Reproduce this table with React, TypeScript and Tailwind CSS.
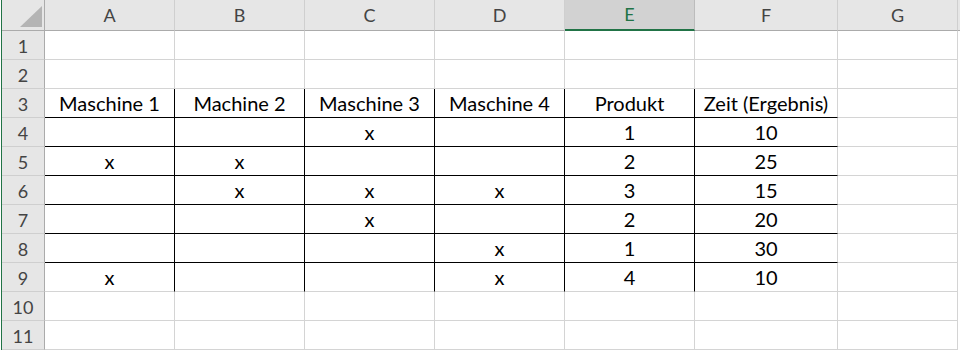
import React from 'react'

const cols = ['A', 'B', 'C', 'D', 'E', 'F', 'G']
const colWidths = ['w-[130px]', 'w-[130px]', 'w-[130px]', 'w-[130px]', 'w-[130px]', 'w-[143px]', 'w-[120px]']

// sheet content, row number -> column values (A..G)
const data: Record<number, string[]> = {
  3: ['Maschine 1', 'Machine 2', 'Maschine 3', 'Maschine 4', 'Produkt', 'Zeit (Ergebnis)', ''],
  4: ['', '', 'x', '', '1', '10', ''],
  5: ['x', 'x', '', '', '2', '25', ''],
  6: ['', 'x', 'x', 'x', '3', '15', ''],
  7: ['', '', 'x', '', '2', '20', ''],
  8: ['', '', '', 'x', '1', '30', ''],
  9: ['x', '', '', 'x', '4', '10', ''],
}

const rows = [1, 2, 3, 4, 5, 6, 7, 8, 9, 10, 11]

function Cell({ row, col, value }: { row: number; col: number; value: string }) {
  // table block A3:F9 gets inside borders only
  const blackRight = row >= 3 && row <= 9 && col <= 4
  const blackBottom = row >= 3 && row <= 8 && col <= 5
  return (
    <div
      className={`${colWidths[col]} h-[29px] shrink-0 flex items-end justify-center pb-[3px] border-r border-b text-[20px] leading-[22px] text-black ${
        blackRight ? 'border-r-black' : 'border-r-[#d4d4d4]'
      } ${blackBottom ? 'border-b-black' : 'border-b-[#d4d4d4]'}`}
    >
      {value}
    </div>
  )
}

export default function App() {
  return (
    <div className="w-[960px] h-[350px] overflow-hidden bg-white flex" style={{ fontFamily: 'Lato, "Open Sans", sans-serif' }}>
      {/* frozen left edge */}
      <div className="w-[1px] bg-white" />
      <div className="w-[1px] bg-[#217346]" />

      <div className="flex flex-col">
        {/* column headers */}
        <div className="flex h-[31px]">
          <div className="w-[43px] h-[31px] shrink-0 bg-[#e6e6e6] border-r border-b border-[#ababab] relative">
            <svg className="absolute left-[18px] top-[6px]" width="22" height="21" viewBox="0 0 22 21">
              <polygon points="22,0 22,21 0,21" fill="#b4b4b4" />
            </svg>
          </div>
          {cols.map((c, i) => (
            <div
              key={c}
              className={`${colWidths[i]} h-[31px] shrink-0 flex items-center justify-center border-r text-[18px] ${
                c === 'E'
                  ? 'bg-[#d2d2d2] border-r-[#bcbcbc] border-b-2 border-b-[#217346] text-[#217346]'
                  : 'bg-[#e6e6e6] border-r-[#cfcfcf] border-b border-b-[#ababab] text-[#444444]'
              }`}
            >
              {c}
            </div>
          ))}
        </div>

        {rows.map((r) => (
          <div key={r} className="flex">
            <div className="w-[43px] h-[29px] shrink-0 bg-[#e6e6e6] border-r border-r-[#ababab] border-b border-b-[#cfcfcf] flex items-center justify-center text-[18px] text-[#444444] pt-[2px]">
              {r}
            </div>
            {cols.map((_, i) => (
              <Cell key={i} row={r} col={i} value={data[r]?.[i] ?? ''} />
            ))}
          </div>
        ))}
      </div>

      <div className="flex-1 flex flex-col">
        <div className="h-[31px] bg-[#e6e6e6] border-b border-[#ababab]" />
      </div>
    </div>
  )
}
